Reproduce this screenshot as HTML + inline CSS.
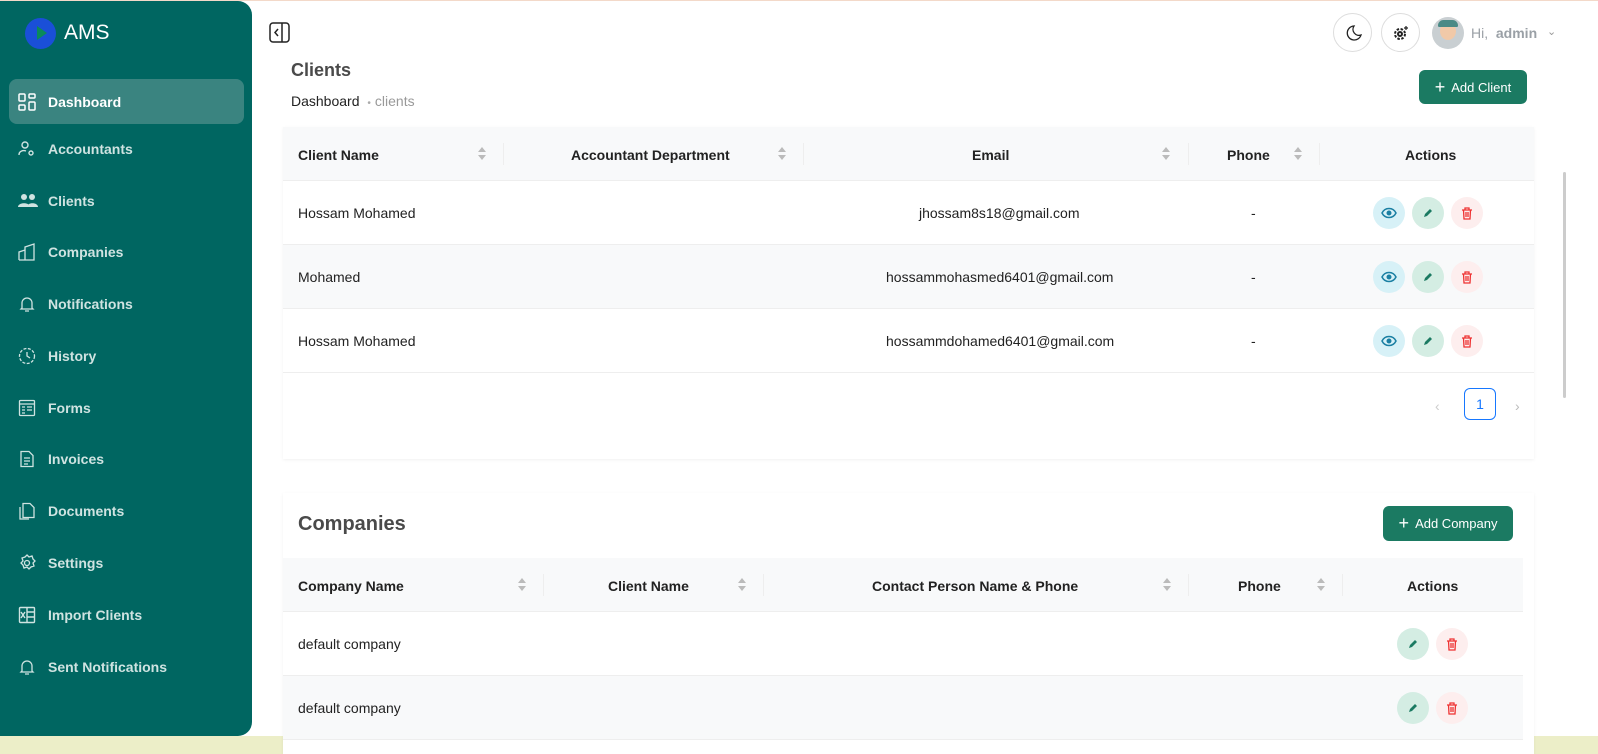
<!DOCTYPE html>
<html><head><meta charset="utf-8"><style>
*{box-sizing:border-box;margin:0;padding:0}
body{width:1598px;height:754px;overflow:hidden;background:#fff;font-family:"Liberation Sans",sans-serif;position:relative;color:#222}
.topline{position:absolute;left:0;top:0;width:1598px;height:1px;background:#f3d9c9}
.bottom{position:absolute;left:0;top:736px;width:1598px;height:18px;background:#eceec8}
.side{position:absolute;left:0;top:1px;width:252px;height:735px;background:#006661;border-radius:0 14px 14px 0}
.logo{position:absolute;left:25px;top:17px;width:31px;height:31px;border-radius:50%;background:#1a4fd8}
.logo:after{content:"";position:absolute;left:12px;top:8px;border-left:10px solid #0a8a5a;border-top:7px solid transparent;border-bottom:7px solid transparent}
.ams{position:absolute;left:64px;top:20px;color:#fff;font-size:21px}
.item{position:absolute;left:9px;width:235px;height:45px;border-radius:8px;color:#cfe3e1;font-size:14px;font-weight:bold;display:flex;align-items:center;padding-left:39px}
.item.act{background:#3a8480;color:#fff}
.item svg{position:absolute;left:9px;top:14px}
.main{position:absolute}
.th{position:absolute;font-size:14px;font-weight:bold;color:#222}
.card{position:absolute;background:#fff;box-shadow:0 1px 3px rgba(0,0,0,.06)}
.hdr{position:absolute;background:#f8f9fa;border-bottom:1px solid #eee}
.row{position:absolute;border-bottom:1px solid #eee;font-size:14px;color:#222}
.row.alt{background:#f8f9fa}
.c{position:absolute;top:0;height:100%;display:flex;align-items:center}
.sort{position:absolute;width:8px;height:14px}
.sort:before{content:"";position:absolute;top:0;border-left:4px solid transparent;border-right:4px solid transparent;border-bottom:5px solid #bbb}
.sort:after{content:"";position:absolute;top:8px;border-left:4px solid transparent;border-right:4px solid transparent;border-top:5px solid #bbb}
.sep{position:absolute;width:1px;height:22px;background:#eee}
.btn{position:absolute;width:32px;height:32px;border-radius:50%;display:flex;align-items:center;justify-content:center}
.v{background:#d7f1f7}.e{background:#d4ede3}.d{background:#fdeeee}
.gbtn{position:absolute;background:#1b7a62;color:#fff;font-size:13px;border-radius:6px;display:flex;align-items:center;justify-content:center;gap:6px}
.rb{position:absolute;width:39px;height:39px;border:1px solid #ddd;border-radius:50%;display:flex;align-items:center;justify-content:center}
</style></head><body>
<div class="topline"></div>
<div class="bottom"></div>
<div class="side">
<div class="logo"></div><div class="ams">AMS</div>
</div>
<div class="item act" style="top:79px"><svg width="18" height="18" viewBox="0 0 18 18" fill="none" stroke="#fff" stroke-width="1.5"><rect x="1" y="1" width="6" height="7" rx="1"/><rect x="11" y="1" width="6" height="4" rx="1"/><rect x="1" y="12" width="6" height="5" rx="1"/><rect x="11" y="9" width="6" height="8" rx="1"/></svg>Dashboard</div>
<div class="item" style="top:126px"><svg width="18" height="18" viewBox="0 0 18 18" fill="none" stroke="#cfe3e1" stroke-width="1.4"><circle cx="7" cy="5" r="3"/><path d="M1 15c0-4 4-5 7-4"/><circle cx="13" cy="13" r="2"/></svg>Accountants</div>
<div class="item" style="top:178px"><svg width="20" height="18" viewBox="0 0 20 18" fill="#cfe3e1"><circle cx="6" cy="5" r="3"/><circle cx="14" cy="5" r="3"/><path d="M0 15c0-5 12-5 12 0zM9 15c0-5 11-5 11 0z"/></svg>Clients</div>
<div class="item" style="top:229px"><svg width="18" height="18" viewBox="0 0 18 18" fill="none" stroke="#cfe3e1" stroke-width="1.3"><path d="M1 17V9l6-2v10M7 17V4l9-3v16H1"/></svg>Companies</div>
<div class="item" style="top:281px"><svg width="18" height="18" viewBox="0 0 18 18" fill="none" stroke="#cfe3e1" stroke-width="1.3"><path d="M4 13V8a5 5 0 0110 0v5l1 1H3zM7 16h4"/></svg>Notifications</div>
<div class="item" style="top:333px"><svg width="18" height="18" viewBox="0 0 18 18" fill="none" stroke="#cfe3e1" stroke-width="1.3" stroke-dasharray="3 1.5"><circle cx="9" cy="9" r="7.5"/><path d="M9 5v4l3 2" stroke-dasharray="none"/></svg>History</div>
<div class="item" style="top:385px"><svg width="18" height="18" viewBox="0 0 18 18" fill="none" stroke="#cfe3e1" stroke-width="1.3"><rect x="1.5" y="1.5" width="15" height="15" rx="1"/><path d="M1.5 5h15M4 8h3M9 8h5M4 11h3M9 11h5M4 14h3"/></svg>Forms</div>
<div class="item" style="top:436px"><svg width="18" height="18" viewBox="0 0 18 18" fill="none" stroke="#cfe3e1" stroke-width="1.3"><path d="M3 1.5h8l4 4v11H3zM6 8h6M6 11h6M6 14h4"/></svg>Invoices</div>
<div class="item" style="top:488px"><svg width="18" height="18" viewBox="0 0 18 18" fill="none" stroke="#cfe3e1" stroke-width="1.3"><path d="M5 1.5h7l4 4v10H5zM2 5v12h9"/></svg>Documents</div>
<div class="item" style="top:540px"><svg width="18" height="18" viewBox="0 0 18 18" fill="none" stroke="#cfe3e1" stroke-width="1.3"><circle cx="9" cy="9" r="2.5"/><path d="M9 1l2 2 3-1 1 3 2 2-2 2 1 3-3 1-2 2-2-2-3 1-1-3-2-2 2-2-1-3 3-1z"/></svg>Settings</div>
<div class="item" style="top:592px"><svg width="18" height="18" viewBox="0 0 18 18" fill="none" stroke="#cfe3e1" stroke-width="1.4"><rect x="1.5" y="1.5" width="15" height="15" rx="1"/><path d="M9 1.5v15M9 6h7M9 11h7M3 6l4 6M7 6l-4 6"/></svg>Import Clients</div>
<div class="item" style="top:644px"><svg width="18" height="18" viewBox="0 0 18 18" fill="none" stroke="#cfe3e1" stroke-width="1.3"><path d="M4 13V8a5 5 0 0110 0v5l1 1H3zM7 16h4"/></svg>Sent Notifications</div>

<svg style="position:absolute;left:269px;top:22px" width="21" height="21" viewBox="0 0 21 21" fill="none" stroke="#222" stroke-width="1.5"><rect x="1" y="1" width="19" height="19" rx="3"/><path d="M13 1v19M9 7l-3 3.5 3 3.5"/></svg>
<div class="rb" style="left:1333px;top:13px"><svg width="18" height="18" viewBox="0 0 18 18" fill="none" stroke="#222" stroke-width="1.3"><path d="M10 2a7 7 0 107 9 6 6 0 01-7-9z"/></svg></div>
<div class="rb" style="left:1381px;top:13px"><svg width="18" height="18" viewBox="0 0 18 18" fill="none" stroke="#222" stroke-width="2"><circle cx="8" cy="10" r="2"/><circle cx="8" cy="10" r="5" stroke-dasharray="2.5 1.5"/><path d="M14 2v4M12 4h4" stroke-width="1.2"/></svg></div>
<div style="position:absolute;left:1432px;top:17px;width:32px;height:32px;border-radius:50%;background:#c9cfd2;overflow:hidden"><div style="position:absolute;left:8px;top:5px;width:16px;height:18px;border-radius:50%;background:#f1c9a8"></div><div style="position:absolute;left:6px;top:3px;width:20px;height:7px;border-radius:8px 8px 2px 2px;background:#4a8a86"></div></div>
<div style="position:absolute;left:1471px;top:25px;font-size:14px;color:#9aa0a6">Hi, <b>&nbsp;admin</b></div>
<div style="position:absolute;left:1547px;top:25px;font-size:11px;color:#999">⌄</div>
<div style="position:absolute;left:1563px;top:172px;width:3px;height:226px;background:#ccc;border-radius:2px"></div>

<div style="position:absolute;left:291px;top:60px;font-size:18px;font-weight:bold;color:#4a4a4a">Clients</div>
<div style="position:absolute;left:291px;top:93px;font-size:14px;color:#222">Dashboard <span style="color:#aaa;font-size:10px;margin:0 4px">•</span><span style="color:#999">clients</span></div>
<div class="gbtn" style="left:1419px;top:70px;width:108px;height:34px"><span style="font-size:18px;font-weight:300">+</span>Add Client</div>

<div class="card" style="left:283px;top:127px;width:1251px;height:332px">
<div class="hdr" style="left:0;top:0;width:1251px;height:54px">
<div class="th" style="left:15px;top:20px">Client Name</div><div class="sort" style="left:195px;top:20px"></div><div class="sep" style="left:220px;top:16px"></div>
<div class="th" style="left:288px;top:20px">Accountant Department</div><div class="sort" style="left:495px;top:20px"></div><div class="sep" style="left:520px;top:16px"></div>
<div class="th" style="left:689px;top:20px">Email</div><div class="sort" style="left:879px;top:20px"></div><div class="sep" style="left:905px;top:16px"></div>
<div class="th" style="left:944px;top:20px">Phone</div><div class="sort" style="left:1011px;top:20px"></div><div class="sep" style="left:1036px;top:16px"></div>
<div class="th" style="left:1122px;top:20px">Actions</div>
</div>
</div>
<div id="crows"></div>
<div style="position:absolute;left:1435px;top:398px;color:#ccc;font-size:14px">‹</div>
<div style="position:absolute;left:1464px;top:388px;width:32px;height:32px;border:1px solid #1677ff;border-radius:6px;color:#1677ff;font-size:14px;display:flex;align-items:center;justify-content:center">1</div>
<div style="position:absolute;left:1515px;top:398px;color:#bbb;font-size:14px">›</div>

<div class="card" style="left:283px;top:493px;width:1251px;height:261px"></div>
<div style="position:absolute;left:298px;top:513px;font-size:20px;font-weight:bold;color:#4a4a4a">Companies</div>
<div class="gbtn" style="left:1383px;top:506px;width:130px;height:35px"><span style="font-size:18px;font-weight:300">+</span>Add Company</div>
<div class="hdr" style="left:283px;top:558px;width:1240px;height:54px">
<div class="th" style="left:15px;top:20px">Company Name</div><div class="sort" style="left:235px;top:20px"></div><div class="sep" style="left:260px;top:16px"></div>
<div class="th" style="left:325px;top:20px">Client Name</div><div class="sort" style="left:455px;top:20px"></div><div class="sep" style="left:480px;top:16px"></div>
<div class="th" style="left:589px;top:20px">Contact Person Name &amp; Phone</div><div class="sort" style="left:880px;top:20px"></div><div class="sep" style="left:905px;top:16px"></div>
<div class="th" style="left:955px;top:20px">Phone</div><div class="sort" style="left:1034px;top:20px"></div><div class="sep" style="left:1059px;top:16px"></div>
<div class="th" style="left:1124px;top:20px">Actions</div>
</div>
<div class="row" style="left:283px;top:612px;width:1240px;height:64px"><div class="c" style="left:15px">default company</div>
<div class="btn e" style="left:1114px;top:16px"><svg width="12" height="12" viewBox="0 0 12 12"><path d="M2 10l1-3 5-5 2 2-5 5z" fill="#1b7a62"/></svg></div>
<div class="btn d" style="left:1153px;top:16px"><svg width="12" height="13" viewBox="0 0 12 13" fill="none" stroke="#e33" stroke-width="1.3"><path d="M1 3h10M4 3V1h4v2M2.5 3l.5 9h6l.5-9M5 5v5M7 5v5"/></svg></div></div>
<div class="row alt" style="left:283px;top:676px;width:1240px;height:64px"><div class="c" style="left:15px">default company</div>
<div class="btn e" style="left:1114px;top:16px"><svg width="12" height="12" viewBox="0 0 12 12"><path d="M2 10l1-3 5-5 2 2-5 5z" fill="#1b7a62"/></svg></div>
<div class="btn d" style="left:1153px;top:16px"><svg width="12" height="13" viewBox="0 0 12 13" fill="none" stroke="#e33" stroke-width="1.3"><path d="M1 3h10M4 3V1h4v2M2.5 3l.5 9h6l.5-9M5 5v5M7 5v5"/></svg></div></div>

<div class="row" style="left:283px;top:181px;width:1251px;height:64px"><div class="c" style="left:15px">Hossam Mohamed</div><div class="c" style="left:636px">jhossam8s18@gmail.com</div><div class="c" style="left:968px">-</div>
<div class="btn v" style="left:1090px;top:16px"><svg width="16" height="12" viewBox="0 0 16 12"><path d="M1 6c3-6 11-6 14 0-3 6-11 6-14 0z" fill="none" stroke="#1a7fa3" stroke-width="1.5"/><circle cx="8" cy="6" r="2.5" fill="#1a7fa3"/></svg></div>
<div class="btn e" style="left:1129px;top:16px"><svg width="12" height="12" viewBox="0 0 12 12"><path d="M2 10l1-3 5-5 2 2-5 5z" fill="#1b7a62"/></svg></div>
<div class="btn d" style="left:1168px;top:16px"><svg width="12" height="13" viewBox="0 0 12 13" fill="none" stroke="#e33" stroke-width="1.3"><path d="M1 3h10M4 3V1h4v2M2.5 3l.5 9h6l.5-9M5 5v5M7 5v5"/></svg></div></div>
<div class="row alt" style="left:283px;top:245px;width:1251px;height:64px"><div class="c" style="left:15px">Mohamed</div><div class="c" style="left:603px">hossammohasmed6401@gmail.com</div><div class="c" style="left:968px">-</div>
<div class="btn v" style="left:1090px;top:16px"><svg width="16" height="12" viewBox="0 0 16 12"><path d="M1 6c3-6 11-6 14 0-3 6-11 6-14 0z" fill="none" stroke="#1a7fa3" stroke-width="1.5"/><circle cx="8" cy="6" r="2.5" fill="#1a7fa3"/></svg></div>
<div class="btn e" style="left:1129px;top:16px"><svg width="12" height="12" viewBox="0 0 12 12"><path d="M2 10l1-3 5-5 2 2-5 5z" fill="#1b7a62"/></svg></div>
<div class="btn d" style="left:1168px;top:16px"><svg width="12" height="13" viewBox="0 0 12 13" fill="none" stroke="#e33" stroke-width="1.3"><path d="M1 3h10M4 3V1h4v2M2.5 3l.5 9h6l.5-9M5 5v5M7 5v5"/></svg></div></div>
<div class="row" style="left:283px;top:309px;width:1251px;height:64px"><div class="c" style="left:15px">Hossam Mohamed</div><div class="c" style="left:603px">hossammdohamed6401@gmail.com</div><div class="c" style="left:968px">-</div>
<div class="btn v" style="left:1090px;top:16px"><svg width="16" height="12" viewBox="0 0 16 12"><path d="M1 6c3-6 11-6 14 0-3 6-11 6-14 0z" fill="none" stroke="#1a7fa3" stroke-width="1.5"/><circle cx="8" cy="6" r="2.5" fill="#1a7fa3"/></svg></div>
<div class="btn e" style="left:1129px;top:16px"><svg width="12" height="12" viewBox="0 0 12 12"><path d="M2 10l1-3 5-5 2 2-5 5z" fill="#1b7a62"/></svg></div>
<div class="btn d" style="left:1168px;top:16px"><svg width="12" height="13" viewBox="0 0 12 13" fill="none" stroke="#e33" stroke-width="1.3"><path d="M1 3h10M4 3V1h4v2M2.5 3l.5 9h6l.5-9M5 5v5M7 5v5"/></svg></div></div>
</body></html>
